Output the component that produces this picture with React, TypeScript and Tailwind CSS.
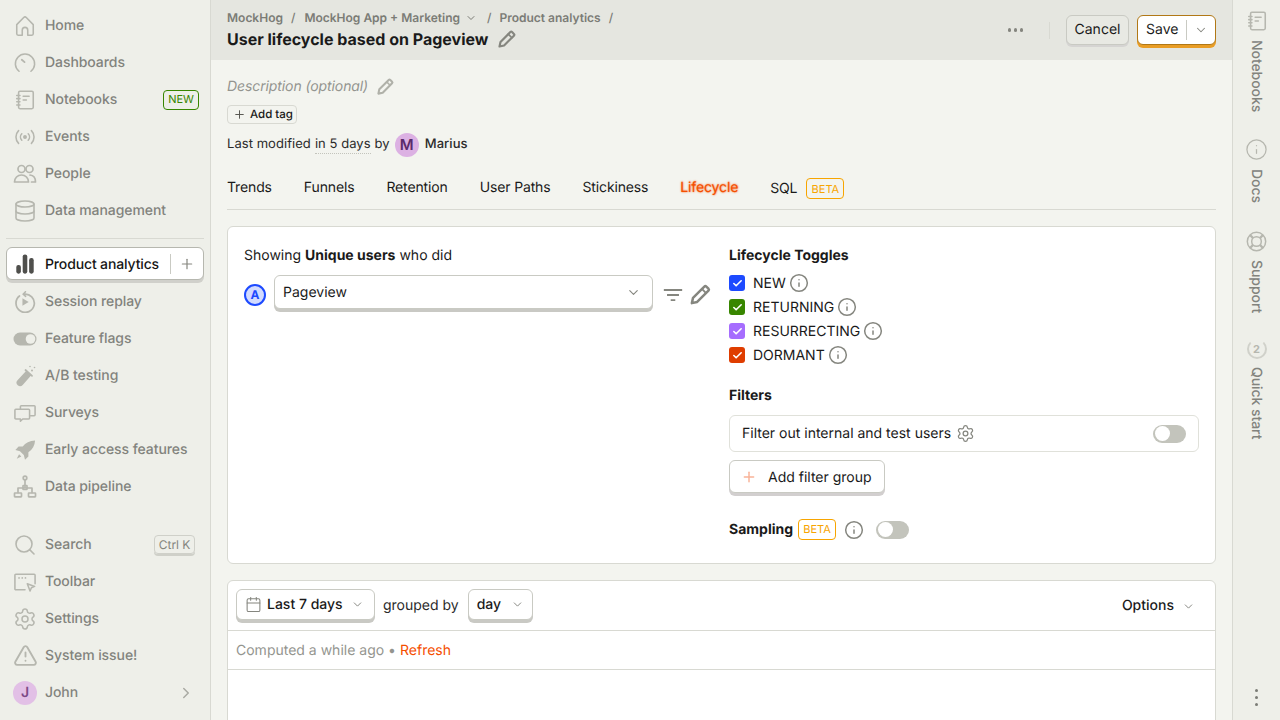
import React from 'react';
import { Calendar, Check, ChevronDown, ChevronRight, Database, Info, Plus, Search, Settings, TriangleAlert } from 'lucide-react';

type IconProps = { className?: string };

const Svg: React.FC<React.PropsWithChildren<IconProps>> = ({ className, children }) => (
  <svg viewBox="0 0 24 24" fill="none" stroke="currentColor" strokeWidth={1.7} strokeLinecap="round" strokeLinejoin="round" className={className}>
    {children}
  </svg>
);

const PencilIcon = (p: IconProps) => (
  <Svg {...p}>
    <path d="M3 21l1.200-5.500L16 3.700a1.500 1.500 0 0 1 2.100 0l2.200 2.200a1.500 1.500 0 0 1 0 2.100L8.500 19.800z" strokeWidth={2.600} />
    <path d="M13.500 6.200l4.300 4.300" strokeWidth={2} />
  </Svg>
);
const HomeIcon = (p: IconProps) => (
  <Svg {...p}>
    <path d="M3 10.500 10.600 2.800a2 2 0 0 1 2.800 0L21 10.500V20.500a1.500 1.500 0 0 1-1.500 1.500H15V16.500a3 3 0 0 0-6 0V22H4.500A1.500 1.500 0 0 1 3 20.500z" />
  </Svg>
);
const GaugeIcon = (p: IconProps) => (
  <Svg {...p}>
    <path d="M5.500 21a10.500 10.500 0 1 1 13 0" />
    <path d="M8.500 8.500l3 2.500" strokeWidth={2} />
  </Svg>
);
const NotebookIcon = (p: IconProps) => (
  <Svg {...p}>
    <rect x="5" y="2.500" width="16" height="19" rx="1.500" />
    <path d="M10 8h6.500M10 12h3.500M3 7h3.500M3 10.500h3.500M3 14h3.500M3 17.500h3.500" />
  </Svg>
);
const EventsIcon = (p: IconProps) => (
  <Svg {...p}>
    <circle cx="12" cy="12" r="1.300" fill="currentColor" />
    <path d="M8.500 8.500a5 5 0 0 0 0 7M15.500 8.500a5 5 0 0 1 0 7M5 5a10 10 0 0 0 0 14M19 5a10 10 0 0 1 0 14" />
  </Svg>
);
const PeopleIcon = (p: IconProps) => (
  <Svg {...p}>
    <circle cx="8.500" cy="7" r="3.500" />
    <circle cx="16.500" cy="7" r="3.500" />
    <path d="M1.500 20c0-4 3-7 7-7s7 3 7 7z" />
    <path d="M17 13c3.300.3 5.500 3 5.500 7h-4" />
  </Svg>
);
const AnalyticsIcon = (p: IconProps) => (
  <svg viewBox="0 0 24 24" fill="currentColor" className={p.className}>
    <rect x="2.500" y="13" width="5" height="9.500" rx="2.300" />
    <rect x="9.500" y="1.500" width="5" height="21" rx="2.300" />
    <rect x="16.500" y="5.500" width="5" height="17" rx="2.300" />
  </svg>
);
const ReplayIcon = (p: IconProps) => (
  <Svg {...p}>
    <path d="M6 5.500a10 10 0 1 0 4.500-2" strokeWidth={1.900} />
    <path d="M12.500 .8l-2.500 2.700 2.700 2.300" />
    <path d="M9.200 8v8l6.800-4z" fill="currentColor" stroke="none" />
  </Svg>
);
const FlagIcon = (p: IconProps) => (
  <svg viewBox="0 0 24 24" className={p.className}>
    <rect x=".5" y="5.500" width="23" height="13" rx="6.500" fill="currentColor" />
    <circle cx="17.500" cy="12" r="4.800" fill="#eeefe9" />
  </svg>
);
const FlaskIcon = (p: IconProps) => (
  <svg viewBox="0 0 24 24" fill="currentColor" className={p.className}>
    <path d="M13.500 6.500l5 4.500-8.800 10a3.500 3.500 0 0 1-5.200-4.700z" />
    <path d="M12.500 6l6.500 5.800" stroke="currentColor" strokeWidth={1.800} strokeLinecap="round" />
    <circle cx="19" cy="6.500" r="1" />
    <circle cx="21.500" cy="3.500" r=".8" />
    <circle cx="17" cy="2.500" r=".8" />
  </svg>
);
const SurveyIcon = (p: IconProps) => (
  <Svg {...p}>
    <path d="M7 8V5a1 1 0 0 1 1-1h14a1 1 0 0 1 1 1v9a1 1 0 0 1-1 1h-4" />
    <path d="M2 8h14a1 1 0 0 1 1 1v8.500a1 1 0 0 1-1 1H9.500L7 21v-2.500H2a1 1 0 0 1-1-1V9a1 1 0 0 1 1-1z" />
  </Svg>
);
const RocketIcon = (p: IconProps) => (
  <svg viewBox="0 0 24 24" fill="currentColor" className={p.className}>
    <path d="M23 1.500c-6 .2-10.500 2.400-13.500 6.800H5L1.500 12l5 1.300 4.200 4.200 1.300 5 3.700-3.500v-4.500c4.500-3 7-7.500 7.300-13z" />
    <path d="M5.500 16.500 3 21.500l5-2.500z" />
  </svg>
);
const PipelineIcon = (p: IconProps) => (
  <Svg {...p}>
    <circle cx="12" cy="3" r="1.800" />
    <path d="M12 5v8M5 17.500V13h14v4.500" />
    <rect x="1.500" y="18" width="7" height="3.800" rx=".5" />
    <rect x="15.500" y="18" width="7" height="3.800" rx=".5" />
    <rect x="10" y="10.500" width="4" height="4" rx=".5" />
  </Svg>
);
const ToolbarIcon = (p: IconProps) => (
  <Svg {...p}>
    <path d="M12 20.500H2a1 1 0 0 1-1-1V4.500a1 1 0 0 1 1-1h20a1 1 0 0 1 1 1V14" />
    <path d="M14.500 14l8 2.800-3.500 1.500-1.500 3.500z" />
    <path d="M5.500 7.500h.01M9 7.500h.01M12.500 7.500h.01" strokeWidth={1.900} />
  </Svg>
);
const LifebuoyIcon = (p: IconProps) => (
  <Svg {...p}>
    <circle cx="12" cy="12" r="10.500" />
    <circle cx="12" cy="12" r="5.500" />
    <path d="M4.600 4.600l3.500 3.500M19.400 4.600l-3.500 3.500M4.600 19.400l3.500-3.500M19.400 19.400l-3.500-3.500" strokeWidth={2.600} strokeLinecap="butt" />
  </Svg>
);
const FilterIcon = (p: IconProps) => (
  <Svg {...p}>
    <path d="M2 6.500h20M5.500 12h13M9.500 17.500h5" strokeWidth={2} strokeLinecap="butt" />
  </Svg>
);

const NavItem: React.FC<{ label: string; icon: React.ReactNode; right?: React.ReactNode }> = ({ label, icon, right }) => (
  <div className="flex h-[37px] items-center pl-[14px] pr-[11px] text-[14px] font-medium tracking-[-0.07px] text-[#82837d]">
    <span className="flex w-[22px] justify-center text-[#b6b7af]">{icon}</span>
    <span className="ml-[9px] flex-1">{label}</span>
    {right}
  </div>
);

const ic = 'size-[22px] shrink-0';
const icl = 'size-[24px] shrink-0';

const TabLabel: React.FC<{ label: string; active?: boolean; children?: React.ReactNode }> = ({ label, active, children }) => (
  <div className={active ? 'flex items-center gap-[9px] text-[#f54e00] [text-shadow:0_0_2px_#f54e00]' : 'flex items-center gap-[9px]'}>
    {label}
    {children}
  </div>
);

const BetaTag = () => (
  <span className="flex h-[21px] w-[38px] items-center justify-center rounded-[4px] border border-[#f7a501] text-[11px] font-normal tracking-normal text-[#f7a501]">BETA</span>
);

const Toggle = () => (
  <span className="flex h-[18px] w-[33px] items-center rounded-full bg-[#c3c4bc] pl-[2px]">
    <span className="size-[15px] rounded-full bg-white" />
  </span>
);

const InfoIcon = () => <Info className="size-[20px] text-[#85867f]" strokeWidth={1.800} />;

const Toggled: React.FC<{ label: string; color: string }> = ({ label, color }) => (
  <div className="flex h-[24px] items-center">
    <span className={`flex size-[16px] items-center justify-center rounded-[3px] ${color}`}>
      <Check className="size-[11px] text-white" strokeWidth={3.500} />
    </span>
    <span className="ml-2 mr-[3px]">{label}</span>
    <InfoIcon />
  </div>
);

const SideTab: React.FC<{ label: string; icon: React.ReactNode; className: string }> = ({ label, icon, className }) => (
  <div className={`flex flex-col items-center ${className}`}>
    <span className="text-[#b6b7af]">{icon}</span>
    <span className="mt-[8px] pr-[2px] text-[14px] leading-[20px] font-medium tracking-[-0.07px] text-[#82837d] [writing-mode:vertical-rl]">{label}</span>
  </div>
);

export default function App() {
  return (
    <div className="flex h-[720px] w-[1280px] overflow-hidden bg-[#f3f4ef] text-[14px] text-[#1a1a1a] [font-family:Inter,sans-serif] [text-rendering:geometricPrecision]">
      {/* left nav */}
      <aside className="flex w-[211px] shrink-0 flex-col border-r border-[#d8d9d2] bg-[#eeefe9] pt-[7px]">
        <NavItem label="Home" icon={<HomeIcon className={ic} />} />
        <NavItem label="Dashboards" icon={<GaugeIcon className={ic} />} />
        <NavItem
          label="Notebooks"
          icon={<NotebookIcon className={ic} />}
          right={<span className="flex h-[20px] w-[36px] items-center justify-center rounded-[4px] border border-[#388600] text-[11px] font-normal tracking-normal text-[#388600]">NEW</span>}
        />
        <NavItem label="Events" icon={<EventsIcon className={ic} />} />
        <NavItem label="People" icon={<PeopleIcon className="size-[24px] shrink-0" />} />
        <NavItem label="Data management" icon={<Database className={icl} strokeWidth={1.600} />} />
        <div className="mx-[6px] mt-[9px] h-px bg-[#d8d9d2]" />
        <div className="mx-[6px] mt-[8px] mb-[3px] flex h-[33px] items-center rounded-[6px] border border-[#b6b7af] bg-white pl-[7px] font-medium tracking-[-0.14px] text-[#151515] shadow-[0_3px_0_#d0d0cb]">
          <AnalyticsIcon className="size-[22px] shrink-0 text-[#4f4f4c]" />
          <span className="ml-[9px] flex-1 pt-[1px]">Product analytics</span>
          <span className="h-[20px] w-px bg-[#c9cac3]" />
          <Plus className="mx-[8px] size-[16px] text-[#85867f]" strokeWidth={1.800} />
        </div>
        <NavItem label="Session replay" icon={<ReplayIcon className={ic} />} />
        <NavItem label="Feature flags" icon={<FlagIcon className={icl} />} />
        <NavItem label="A/B testing" icon={<FlaskIcon className={icl} />} />
        <NavItem label="Surveys" icon={<SurveyIcon className={ic} />} />
        <NavItem label="Early access features" icon={<RocketIcon className={ic} />} />
        <NavItem label="Data pipeline" icon={<PipelineIcon className={icl} />} />
        <div className="mt-[21px]">
          <NavItem
            label="Search"
            icon={<Search className={icl} strokeWidth={1.600} />}
            right={<span className="mr-[4px] flex h-[19px] w-[41px] items-center justify-center rounded-[4px] border border-[#cfd0c9] text-[12px] font-normal text-[#85867f] shadow-[0_2px_0_#cfd0c9]">Ctrl K</span>}
          />
          <NavItem label="Toolbar" icon={<ToolbarIcon className={ic} />} />
          <NavItem label="Settings" icon={<Settings className={icl} strokeWidth={1.500} />} />
          <NavItem label="System issue!" icon={<TriangleAlert className="size-[25px] shrink-0" strokeWidth={1.800} />} />
          <NavItem
            label="John"
            icon={<span className="flex size-[24px] shrink-0 items-center justify-center rounded-full bg-[#e2c0e6] text-[14px] font-semibold text-[#7d4a87]">J</span>}
            right={<ChevronRight className="mr-[4px] size-[18px] text-[#a9aaa3]" strokeWidth={2} />}
          />
        </div>
      </aside>

      {/* main column */}
      <main className="flex min-w-0 flex-1 flex-col">
        <header className="flex h-[60px] shrink-0 items-center bg-[#e5e6e0] pl-[16px] pr-[16px]">
          <div className="flex-1">
            <div className="flex h-[16px] items-center text-[12px] font-semibold text-[#7b7c76]">
              <span>MockHog</span>
              <span className="ml-[8px] mr-[9px] font-medium">/</span>
              <span>MockHog App + Marketing</span>
              <ChevronDown className="ml-[5px] size-[12px]" strokeWidth={2} />
              <span className="ml-[10px] mr-[8px] font-medium">/</span>
              <span>Product analytics</span>
              <span className="ml-[8px] font-medium">/</span>
            </div>
            <div className="mt-[2px] flex h-[22px] items-center text-[16px] font-bold">
              User lifecycle based on Pageview
              <PencilIcon className="ml-[9px] size-[20px] text-[#85867f]" />
            </div>
          </div>
          <div className="flex gap-[2.500px]">
            <span className="size-[3.500px] rounded-full bg-[#85867f]" />
            <span className="size-[3.500px] rounded-full bg-[#85867f]" />
            <span className="size-[3.500px] rounded-full bg-[#85867f]" />
          </div>
          <span className="ml-[26px] mr-[16px] h-[17px] w-px bg-[#d8d9d2]" />
          <div className="mb-[1px] flex h-[30px] w-[63px] items-center justify-center rounded-[6px] border border-[#c9cac3] bg-[#e8e9e3] shadow-[0_2px_0_#d5d4d2]">Cancel</div>
          <div className="mb-[1px] ml-[8px] flex h-[30px] w-[79px] items-center rounded-[6px] border border-[#b17816] bg-white pl-[8px] shadow-[0_3px_0_#e99d25]">
            <span>Save</span>
            <span className="ml-[8px] h-[20px] w-px bg-[#c9cac3]" />
            <ChevronDown className="ml-[7px] size-[14px] text-[#85867f]" strokeWidth={1.800} />
          </div>
        </header>

        <div className="flex-1 overflow-hidden px-[16px]">
          <div className="mt-[16px] flex h-[20px] items-center italic tracking-[-0.1px] text-[#94958f]">
            Description (optional)
            <PencilIcon className="ml-[8px] size-[19px] not-italic text-[#b0b1a9]" />
          </div>
          <div className="mt-[9px] flex h-[19px] w-[70px] items-center rounded-[4px] border border-[#d8d9d2] pl-[5px] text-[11.500px] font-medium">
            <Plus className="mr-[4px] size-[13px] text-[#55554f]" strokeWidth={1.800} />
            Add tag
          </div>
          <div className="mt-[9px] flex h-[24px] items-center text-[13px] tracking-[0.05px] text-[#2b2b2b]">
            Last modified
            <span className="ml-[4px] border-b border-dotted border-[#c3c4bc] leading-[17px]">in 5 days</span>
            <span className="ml-[4px]">by</span>
            <span className="ml-[5px] flex size-[24px] items-center justify-center rounded-full bg-[#dcb1e3] text-[15px] font-semibold text-[#5b2b6b]">M</span>
            <span className="ml-[6px] font-medium">Marius</span>
          </div>
          <div className="mt-[20px] flex h-[33px] items-start gap-[32px] border-b border-[#d8d9d2] pt-[1px] leading-[20px] tracking-[-0.14px]">
            <TabLabel label="Trends" />
            <TabLabel label="Funnels" />
            <TabLabel label="Retention" />
            <TabLabel label="User Paths" />
            <TabLabel label="Stickiness" />
            <TabLabel label="Lifecycle" active />
            <TabLabel label="SQL"><BetaTag /></TabLabel>
          </div>

          {/* query card */}
          <section className="mt-[16px] flex h-[338px] gap-[16px] rounded-[6px] border border-[#d8d9d2] bg-white px-[16px] pt-[19px]">
            <div className="w-[469px]">
              <div className="h-[20px] leading-[20px]">Showing <b className="font-bold">Unique users</b> who did</div>
              <div className="mt-[9px] flex items-start">
                <span className="mt-[9px] flex size-[22px] items-center justify-center rounded-full border-2 border-[#1d4aff] bg-[#d2dbff] text-[12px] font-bold text-[#1d4aff]">A</span>
                <div className="ml-[8px] flex h-[34px] w-[379px] items-center justify-between rounded-[6px] border border-[#c9cac3] bg-white pl-[8px] pr-[11px] shadow-[0_3px_0_#c9c9c4]">
                  Pageview
                  <ChevronDown className="size-[15px] text-[#85867f]" strokeWidth={1.800} />
                </div>
                <FilterIcon className="ml-[9px] mt-[9px] size-[22px] text-[#85867f]" />
                <PencilIcon className="ml-[5px] mt-[8px] size-[23px] text-[#85867f]" />
              </div>
            </div>
            <div className="flex-1">
              <div className="h-[20px] font-bold leading-[20px]">Lifecycle Toggles</div>
              <div className="mt-[5px]">
                <Toggled label="NEW" color="bg-[#1d4aff]" />
                <Toggled label="RETURNING" color="bg-[#388600]" />
                <Toggled label="RESURRECTING" color="bg-[#a66dfe]" />
                <Toggled label="DORMANT" color="bg-[#df3d00]" />
              </div>
              <div className="mt-[19px] h-[20px] font-bold leading-[20px]">Filters</div>
              <div className="mt-[9px] flex h-[37px] items-center rounded-[6px] border border-[#e0e1da] pl-[12px] pr-[12px]">
                <span>Filter out internal and test users</span>
                <Settings className="ml-[5px] size-[19px] text-[#85867f]" strokeWidth={1.600} />
                <span className="ml-auto"><Toggle /></span>
              </div>
              <div className="mt-[8px] flex h-[33px] w-[156px] items-center rounded-[6px] border border-[#c9cac3] bg-white pl-[11px] pt-[1px] shadow-[0_3px_0_#d2cfcf]">
                <Plus className="size-[16px] text-[#f9b398]" strokeWidth={2.200} />
                <span className="ml-[11px]">Add filter group</span>
              </div>
              <div className="mt-[26px] flex h-[21px] items-center">
                <span className="font-bold">Sampling</span>
                <span className="ml-[5px]"><BetaTag /></span>
                <span className="ml-[8px]"><InfoIcon /></span>
                <span className="ml-[12px]"><Toggle /></span>
              </div>
            </div>
          </section>

          {/* results card */}
          <section className="mt-[16px] h-[200px] rounded-t-[6px] border border-[#d8d9d2] bg-white">
            <div className="flex h-[50px] items-start border-b border-[#d8d9d2] pl-[8px] pr-[20px] pt-[8px]">
              <div className="flex h-[31px] w-[139px] items-center rounded-[6px] border border-[#c9cac3] bg-white pl-[8px] font-medium shadow-[0_3px_0_#c9c9c4]">
                <Calendar className="mr-[5px] size-[17px] text-[#85867f]" strokeWidth={1.500} />
                Last 7 days
                <ChevronDown className="ml-[8px] size-[13px] text-[#85867f]" strokeWidth={1.800} />
              </div>
              <span className="ml-[8px] mr-[9px] mt-[7px] leading-[20px] text-[#2b2b2b]">grouped by</span>
              <div className="flex h-[31px] w-[65px] items-center rounded-[6px] border border-[#c9cac3] bg-white pl-[8px] font-medium shadow-[0_3px_0_#c9c9c4]">
                day
                <ChevronDown className="ml-[10px] size-[13px] text-[#85867f]" strokeWidth={1.800} />
              </div>
              <div className="ml-auto mt-[7px] flex items-center font-medium leading-[20px]">
                Options
                <ChevronDown className="ml-[8px] size-[13px] text-[#85867f]" strokeWidth={1.800} />
              </div>
            </div>
            <div className="flex h-[39px] items-center border-b border-[#d8d9d2] pl-[8px] text-[#94958f]">
              Computed a while ago
              <span className="mx-[4px]">•</span>
              <span className="text-[#f54e00]">Refresh</span>
            </div>
          </section>
        </div>
      </main>

      {/* right rail */}
      <aside className="flex w-[48px] shrink-0 flex-col items-center border-l border-[#d8d9d2] bg-[#eeefe9] pt-[10px]">
        <SideTab label="Notebooks" icon={<NotebookIcon className="size-[22px]" />} className="" />
        <SideTab label="Docs" icon={<Info className="size-[23px]" strokeWidth={1.300} />} className="mt-[26px]" />
        <SideTab label="Support" icon={<LifebuoyIcon className="size-[21px]" />} className="mt-[28px]" />
        <SideTab
          label="Quick start"
          icon={<span className="flex size-[20px] items-center justify-center rounded-full border-2 border-[#d0d1ca] border-t-[#eeefe9] text-[11px] font-bold text-[#b6b7af]">2</span>}
          className="mt-[26px]"
        />
        <div className="mb-[14px] mt-auto flex flex-col gap-[4px]">
          <span className="size-[3px] rounded-full bg-[#7b7c76]" />
          <span className="size-[3px] rounded-full bg-[#7b7c76]" />
          <span className="size-[3px] rounded-full bg-[#7b7c76]" />
        </div>
      </aside>
    </div>
  );
}
